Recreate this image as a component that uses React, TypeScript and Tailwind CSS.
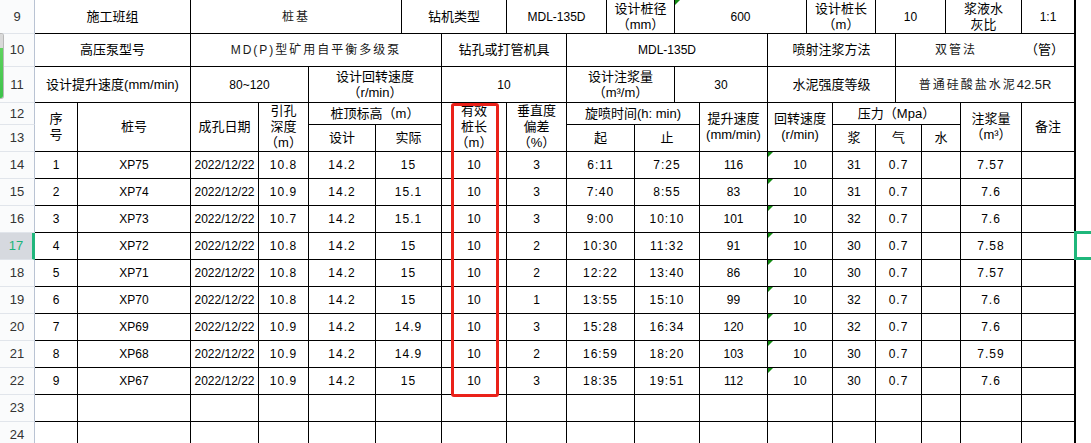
import React from "react";

type CellProps = { c?: string; children?: React.ReactNode; tri?: boolean };

function Cell({ c = "", children, tri }: CellProps) {
  return (
    <div
      className={`relative flex flex-col items-center justify-center text-center border-r border-b border-black overflow-hidden whitespace-nowrap ${c}`}
    >
      {tri && (
        <span className="absolute left-0 top-0 w-0 h-0 border-t-[5px] border-r-[5px] border-t-[#138a13] border-r-transparent" />
      )}
      {children}
    </div>
  );
}

function RH({ n, active }: { n: number; active?: boolean }) {
  return (
    <div
      className={
        active
          ? "flex items-center justify-center bg-[#d6d9df] text-[#1bb47a] border-r-[3px] border-r-[#21b67c] border-b border-b-[#dfe3e9] text-[13px]"
          : "flex items-center justify-center bg-[#fafbfc] text-[#333] border-r border-r-[#b9c3d3] border-b border-b-[#e1e5eb] text-[13px]"
      }
    >
      {n}
    </div>
  );
}

const H = "text-[13px] leading-[16px]";
const S = "text-[12px] text-[#1a1a1a] tracking-[2px]";

const data = [
  ["1", "XP75", "10.8", "14.2", "15", "3", "6:11", "7:25", "116", "31", "7.57"],
  ["2", "XP74", "10.9", "14.2", "15.1", "3", "7:40", "8:55", "83", "31", "7.6"],
  ["3", "XP73", "10.7", "14.2", "15.1", "3", "9:00", "10:10", "101", "32", "7.6"],
  ["4", "XP72", "10.8", "14.2", "15", "2", "10:30", "11:32", "91", "30", "7.58"],
  ["5", "XP71", "10.8", "14.2", "15", "2", "12:22", "13:40", "86", "30", "7.57"],
  ["6", "XP70", "10.8", "14.2", "15", "1", "13:55", "15:10", "99", "32", "7.6"],
  ["7", "XP69", "10.9", "14.2", "14.9", "3", "15:28", "16:34", "120", "32", "7.6"],
  ["8", "XP68", "10.9", "14.2", "14.9", "2", "16:59", "18:20", "103", "30", "7.59"],
  ["9", "XP67", "10.9", "14.2", "15", "3", "18:35", "19:51", "112", "30", "7.6"],
];

export default function App() {
  return (
    <div className="relative w-[1091px] h-[443px] overflow-hidden bg-white text-black font-['Liberation_Sans','Noto_Sans_CJK_SC',sans-serif]">
      <div className="grid w-[1076px] grid-cols-[35px_43px_113px_68px_50px_67px_26px_40px_65px_60px_40px_28px_40px_25px_68px_39px_26px_43px_20px_26px_24px_15px_61px_54px] grid-rows-[34px_33px_36px_22px_27px_27px_27px_27px_27px_27px_27px_27px_27px_27px_27px_27px]">
        {/* Row 9 */}
        <RH n={9} />
        <Cell c={`col-span-2 ${H}`}>施工班组</Cell>
        <Cell c={`col-span-4 ${S}`}>桩基</Cell>
        <Cell c={`col-span-2 ${H}`}>钻机类型</Cell>
        <Cell c="col-span-2 text-[12px]">MDL-135D</Cell>
        <Cell c={`col-span-2 ${H}`}>
          <span>设计桩径</span>
          <span>（mm）</span>
        </Cell>
        <Cell c="col-span-3 text-[12px]" tri>
          600
        </Cell>
        <Cell c={`col-span-2 ${H}`}>
          <span>设计桩长</span>
          <span>（m）</span>
        </Cell>
        <Cell c="col-span-3 text-[12px]">10</Cell>
        <Cell c={`col-span-2 ${H}`}>
          <span>浆液水</span>
          <span>灰比</span>
        </Cell>
        <Cell c="col-span-1 border-r-2 text-[12px]">1:1</Cell>

        {/* Row 10 */}
        <RH n={10} />
        <Cell c={`col-span-2 ${H}`}>高压泵型号</Cell>
        <Cell c={`col-span-5 ${S}`}>MD(P)型矿用自平衡多级泵</Cell>
        <Cell c={`col-span-2 ${H}`}>钻孔或打管机具</Cell>
        <Cell c="col-span-5 text-[12px]">MDL-135D</Cell>
        <Cell c={`col-span-4 ${H}`}>喷射注浆方法</Cell>
        <div className="col-span-5 flex items-center justify-between border-r-2 border-b border-black pl-[39px] pr-[10px]">
          <span className={S}>双管法</span>
          <span className="text-[13px]">（管）</span>
        </div>

        {/* Row 11 */}
        <RH n={11} />
        <Cell c={`col-span-2 ${H}`}>设计提升速度(mm/min)</Cell>
        <Cell c="col-span-2 text-[12px]">80~120</Cell>
        <Cell c={`col-span-3 ${H}`}>
          <span>设计回转速度</span>
          <span>（r/min）</span>
        </Cell>
        <Cell c="col-span-2 text-[12px]">10</Cell>
        <Cell c={`col-span-3 ${H}`}>
          <span>设计注浆量</span>
          <span>（m³/m）</span>
        </Cell>
        <Cell c="col-span-2 text-[12px]">30</Cell>
        <Cell c={`col-span-4 ${H}`}>水泥强度等级</Cell>
        <Cell c={`col-span-5 border-r-2 ${S}`}>
          <span>
            普通硅酸盐水泥<span className="tracking-normal text-[13px]">42.5R</span>
          </span>
        </Cell>

        {/* Row 12 */}
        <RH n={12} />
        <Cell c={`col-span-1 row-span-2 ${H}`}>
          <span>序</span>
          <span>号</span>
        </Cell>
        <Cell c={`col-span-1 row-span-2 ${H}`}>桩号</Cell>
        <Cell c={`col-span-1 row-span-2 ${H}`}>成孔日期</Cell>
        <Cell c={`col-span-1 row-span-2 ${H}`}>
          <span>引孔</span>
          <span>深度</span>
          <span>（m）</span>
        </Cell>
        <Cell c={`col-span-3 ${H}`}>桩顶标高（m）</Cell>
        <Cell c={`col-span-1 row-span-2 ${H}`}>
          <span>有效</span>
          <span>桩长</span>
          <span>（m）</span>
        </Cell>
        <Cell c={`col-span-1 row-span-2 ${H}`}>
          <span>垂直度</span>
          <span>偏差</span>
          <span>（%）</span>
        </Cell>
        <Cell c={`col-span-4 ${H}`}>旋喷时间(h: min)</Cell>
        <Cell c={`col-span-1 row-span-2 ${H}`}>
          <span>提升速度</span>
          <span>(mm/min)</span>
        </Cell>
        <Cell c={`col-span-2 row-span-2 ${H}`}>
          <span>回转速度</span>
          <span>(r/min)</span>
        </Cell>
        <Cell c={`col-span-5 ${H}`}>压力（Mpa）</Cell>
        <Cell c={`col-span-1 row-span-2 ${H}`}>
          <span>注浆量</span>
          <span>（m³）</span>
        </Cell>
        <Cell c={`col-span-1 row-span-2 border-r-2 ${H}`}>备注</Cell>

        {/* Row 13 */}
        <RH n={13} />
        <Cell c={`col-span-1 ${H}`}>设计</Cell>
        <Cell c={`col-span-2 ${H}`}>实际</Cell>
        <Cell c={`col-span-2 ${H}`}>起</Cell>
        <Cell c={`col-span-2 ${H}`}>止</Cell>
        <Cell c={`col-span-1 ${H}`}>浆</Cell>
        <Cell c={`col-span-2 ${H}`}>气</Cell>
        <Cell c={`col-span-2 ${H}`}>水</Cell>

        {/* Data rows */}
        {data.map((r, i) => (
          <React.Fragment key={i}>
            <RH n={14 + i} active={14 + i === 17} />
            <Cell c="col-span-1 text-[12px]">{r[0]}</Cell>
            <Cell c="col-span-1 text-[12px]">{r[1]}</Cell>
            <Cell c="col-span-1 text-[12px]">2022/12/22</Cell>
            <Cell c="col-span-1 text-[12px] tracking-[1px]">{r[2]}</Cell>
            <Cell c="col-span-1 text-[12px] tracking-[1px]">{r[3]}</Cell>
            <Cell c="col-span-2 text-[12px] tracking-[1px]">{r[4]}</Cell>
            <Cell c="col-span-1 text-[12px]">10</Cell>
            <Cell c="col-span-1 text-[12px]">{r[5]}</Cell>
            <Cell c="col-span-2 text-[12px] tracking-[1px]">{r[6]}</Cell>
            <Cell c="col-span-2 text-[12px] tracking-[1px]">{r[7]}</Cell>
            <Cell c="col-span-1 text-[12px]">{r[8]}</Cell>
            <Cell c="col-span-2 text-[12px]" tri>
              10
            </Cell>
            <Cell c="col-span-1 text-[12px]">{r[9]}</Cell>
            <Cell c="col-span-2 text-[12px] tracking-[1px]">0.7</Cell>
            <Cell c="col-span-2" />
            <Cell c="col-span-1 text-[12px] tracking-[1px]">{r[10]}</Cell>
            <Cell c="col-span-1 border-r-2" />
          </React.Fragment>
        ))}

        {/* Empty rows 23, 24 */}
        {[23, 24].map((n) => (
          <React.Fragment key={n}>
            <RH n={n} />
            <Cell c="col-span-1" />
            <Cell c="col-span-1" />
            <Cell c="col-span-1" />
            <Cell c="col-span-1" />
            <Cell c="col-span-1" />
            <Cell c="col-span-2" />
            <Cell c="col-span-1" />
            <Cell c="col-span-1" />
            <Cell c="col-span-2" />
            <Cell c="col-span-2" />
            <Cell c="col-span-1" />
            <Cell c="col-span-2" />
            <Cell c="col-span-1" />
            <Cell c="col-span-2" />
            <Cell c="col-span-2" />
            <Cell c="col-span-1" />
            <Cell c="col-span-1 border-r-2" />
          </React.Fragment>
        ))}
      </div>

      {/* red highlight box */}
      <div className="absolute left-[451px] top-[103px] w-[48px] h-[294px] border-[3px] border-[#ea2119] rounded-[3px]" />

      {/* green selection box */}
      <div className="absolute left-[1074px] top-[231px] w-[30px] h-[29px] border-[3px] border-[#1fb77b]" />

      {/* left floating widget edge */}
      <div className="absolute left-0 top-[33px] w-[4px] h-[66px] rounded-r-[3px] border border-l-0 border-[#b8b8b8] overflow-hidden flex flex-col">
        <div className="h-[14px] bg-[#d9d9d9]" />
        <div className="flex-1 bg-gradient-to-b from-[#5fd35f] to-[#3cc24a]" />
      </div>
    </div>
  );
}
